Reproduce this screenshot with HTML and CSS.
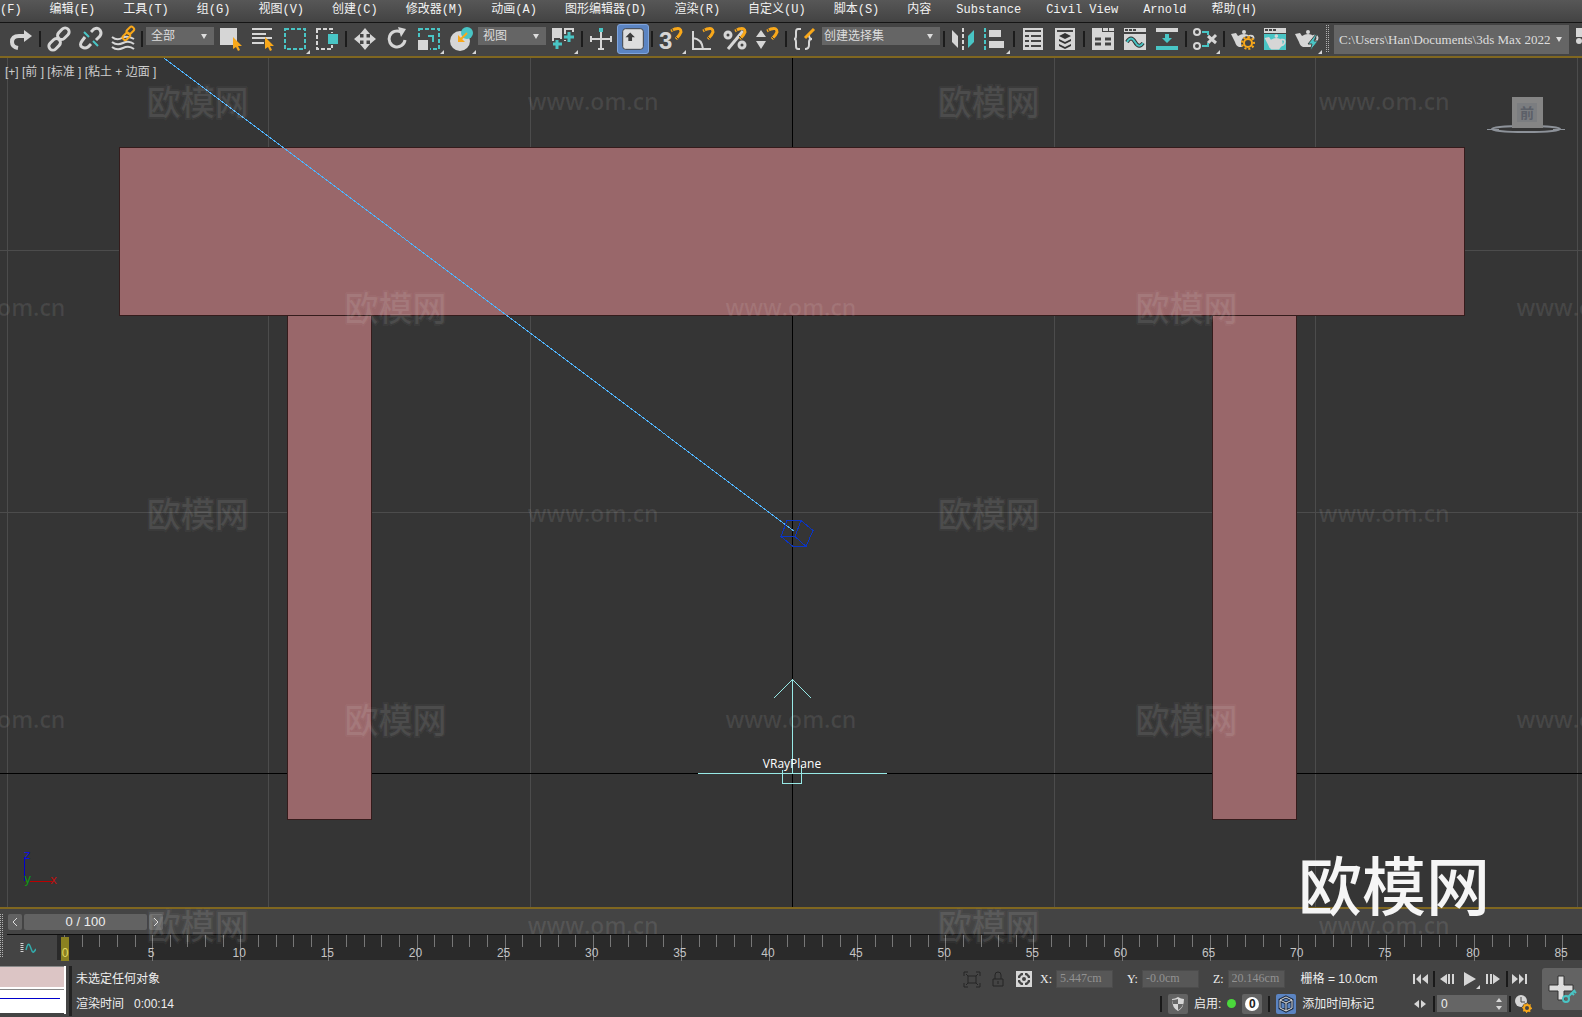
FILE: index.html
```html
<!DOCTYPE html>
<html lang="zh-CN">
	<head>
		<meta charset="utf-8">
		<title>3ds Max 2022</title>
		<link rel="stylesheet" href="styles.css">
	</head>
	<body>
		<svg class="defs" width="0" height="0" aria-hidden="true">
			<defs>
				<path id="flyout" class="lt" d="M27 31h4v-4z"/>
				<g id="magnet"><path class="or w3" d="M16 8l4-2q6-2 6 3-1 3-5 7"/><path stroke="#444" d="M17 6l2 4M20 13l3 3"/></g>
				<g id="teapot">
					<path class="ls" d="M22 13q6-1 4 4-1 2-5 3"/>
					<path class="lt" d="M4 11l5-1 2 3q6-4 12 0 2 4 0 7l-3 4h-8q-3-1-4-5z"/>
					<circle class="lt" cx="17" cy="9" r="2"/>
				</g>
				<g id="gear"><circle cx="21" cy="20" r="4" class="or"/><path class="or" stroke-dasharray="2 2" d="M21 14a6 6 0 1 1 0 12a6 6 0 1 1 0-12z"/></g>
			</defs>
		</svg>

		<nav class="menu">
			<div class="menu-group">
				<a href="#">件(F)</a><a href="#">编辑(E)</a><a href="#">工具(T)</a><a href="#">组(G)</a><a href="#">视图(V)</a><a href="#">创建(C)</a><a href="#">修改器(M)</a><a href="#">动画(A)</a><a href="#">图形编辑器(D)</a><a href="#">渲染(R)</a><a href="#">自定义(U)</a><a href="#">脚本(S)</a><a href="#">内容</a>
			</div>
			<div class="menu-group plugins">
				<a href="#">Substance</a><a href="#">Civil View</a><a href="#">Arnold</a><a href="#">帮助(H)</a>
			</div>
		</nav>

		<div class="toolbar">
			<button class="tool" aria-label="重做"><svg viewBox="0 0 32 32"><path class="ls w4" d="M13 25q-6-1-6-6 0-6 7-6h6"/><path class="lt" d="M19 7l8 6-8 6z"/></svg></button>
			<i class="sep"></i>
			<button class="tool" aria-label="链接"><svg viewBox="0 0 32 32"><g class="ls w3"><rect x="14" y="7" width="13" height="8" rx="4" transform="rotate(-45 20 11)"/><rect x="5" y="17" width="13" height="8" rx="4" transform="rotate(-45 12 21)"/></g></svg></button>
			<button class="tool" aria-label="取消链接"><svg viewBox="0 0 32 32"><g class="ls w3"><path d="M16 9l3-3q4-2 6 1t0 6l-4 4M10 14l-3 4q-3 4 0 6t6 0l3-3"/></g><path class="te" d="M9 9l5 5M18 18l5 5"/></svg></button>
			<button class="tool" aria-label="绑定到空间扭曲"><svg viewBox="0 0 32 32"><path class="ls" d="M5 14q5 4 10 1t12 1M5 19q5 4 11 1t11 1M5 24q5 4 11 1t11 1"/><g class="or"><rect x="19" y="5" width="8" height="5" rx="2" transform="rotate(-45 23 7)"/><rect x="15" y="11" width="8" height="5" rx="2" transform="rotate(-45 19 13)"/></g></svg></button>
			<i class="sep"></i>
			<div class="combo"><select aria-label="选择过滤器"><option>全部</option></select></div>
			<button class="tool" aria-label="选择对象"><svg viewBox="0 0 32 32"><path class="lt" d="M5 5h17v17H5z"/><path class="orf" d="M18 14v12l3-2 2 4 2-1-2-4h4z"/></svg></button>
			<button class="tool" aria-label="按名称选择"><svg viewBox="0 0 32 32"><path class="ls" d="M5 6h20M5 11h14M5 15h20M5 20h12"/><path class="orf" d="M18 14v12l3-2 2 4 2-1-2-4h4z"/></svg></button>
			<button class="tool" aria-label="矩形选择区域"><svg viewBox="0 0 32 32"><path class="te" stroke-dasharray="4 2" d="M6 6h20v20H6z"/><use href="#flyout"/></svg></button>
			<button class="tool" aria-label="窗口/交叉"><svg viewBox="0 0 32 32"><path class="ls" stroke-dasharray="4 2" d="M6 6h15v20H6z"/><path d="M16 10h12v12H16z" fill="#444"/><path class="tef" d="M17 11h10v10H17z"/></svg></button>
			<i class="sep"></i>
			<button class="tool" aria-label="移动"><svg viewBox="0 0 32 32"><path class="ls w3" d="M16 9v14M9 16h14"/><path class="lt" d="M16 5l5 6H11zM16 27l5-6H11zM5 16l6-5v10zM27 16l-6-5v10z"/></svg></button>
			<button class="tool" aria-label="旋转"><svg viewBox="0 0 32 32"><path class="ls w3" d="M20 9a8 8 0 1 0 4 8"/><path class="lt" d="M17 4l8 2-5 8z"/></svg></button>
			<button class="tool" aria-label="缩放"><svg viewBox="0 0 32 32"><path class="te" stroke-dasharray="4 2" d="M6 6h20v20H6z"/><path d="M4 15h13v13H4z" fill="#444"/><path class="lt" d="M5 17h10v10H5z"/><path class="te" d="M15 13h5v6"/><use href="#flyout"/></svg></button>
			<button class="tool" aria-label="放置"><svg viewBox="0 0 32 32"><circle class="lt" cx="15" cy="18" r="10"/><circle class="tef" cx="22" cy="10" r="6"/><path class="or" d="M22 10l-6 6"/><path class="orf" d="M13 19v-7l7 7z"/><use href="#flyout"/></svg></button>
			<div class="combo"><select aria-label="参考坐标系"><option>视图</option></select></div>
			<button class="tool" aria-label="使用轴点中心"><svg viewBox="0 0 32 32"><path class="lt" d="M5 5h10v11H8v8H5zM17 5h10v4h-7v9h-3z"/><path stroke="#444" stroke-width="6" d="M10 15v13M4 21h12M22 7v14M15 14h13"/><path class="te w3" d="M10 17v9M6 21h9M22 9v10M17 14h10"/><use href="#flyout"/></svg></button>
			<i class="sep"></i>
			<button class="tool" aria-label="选择并操纵"><svg viewBox="0 0 32 32"><path class="ls" d="M16 9v18M6 16h20M6 13v6M26 13v6M13 26h6"/><path class="tef" d="M14 5h4v4h-4z"/></svg></button>
			<button class="tool active" aria-label="键盘快捷键覆盖切换"><svg viewBox="0 0 32 32"><rect x="5" y="5" width="22" height="22" rx="3" fill="#ddd" stroke="#3d3d3d"/><path d="M13 9l5 5h-3v4h-4v-4H8z" fill="#3d3d3d"/></svg></button>
			<i class="sep"></i>
			<button class="tool" aria-label="捕捉开关"><svg viewBox="0 0 32 32"><text class="snap" x="4" y="26">3</text><use href="#magnet"/><use href="#flyout"/></svg></button>
			<button class="tool" aria-label="角度捕捉"><svg viewBox="0 0 32 32"><path class="ls" d="M6 8v18h18M6 15q9 1 10 11"/><use href="#magnet"/></svg></button>
			<button class="tool" aria-label="百分比捕捉"><svg viewBox="0 0 32 32"><path class="ls w3" d="M24 8L9 26"/><circle class="ls w3" cx="9" cy="12" r="3"/><circle class="ls w3" cx="23" cy="22" r="3"/><use href="#magnet"/></svg></button>
			<button class="tool" aria-label="微调器捕捉"><svg viewBox="0 0 32 32"><path class="lt" d="M5 14l5-7 5 7zM5 18l5 8 5-8z"/><use href="#magnet"/></svg></button>
			<i class="sep"></i>
			<button class="tool" aria-label="编辑命名选择集"><svg viewBox="0 0 32 32"><path class="ls" d="M12 6H9q-2 0-2 3v4q0 3-2 3 2 0 2 3v4q0 3 2 3h2M16 26q4 0 4-4v-3q0-3 3-3-3 0-3-4"/><path class="or w3" d="M16 15L25 6"/></svg></button>
			<div class="combo wide"><select aria-label="命名选择集"><option>创建选择集</option></select></div>
			<i class="sep"></i>
			<button class="tool" aria-label="镜像"><svg viewBox="0 0 32 32"><path class="lt" d="M5 7l6 6v12l-6-6z"/><path class="ls" stroke-dasharray="4 2" d="M16 5v22"/><path class="tef" d="M27 7l-6 6v12l6-6z"/></svg></button>
			<button class="tool" aria-label="对齐"><svg viewBox="0 0 32 32"><path class="te" stroke-dasharray="4 2" d="M6 5v22"/><path class="lt" d="M10 7h12v7H10zM10 18h15v7H10z"/><use href="#flyout"/></svg></button>
			<i class="sep"></i>
			<button class="tool" aria-label="场景资源管理器"><svg viewBox="0 0 32 32"><path class="lt" d="M6 5h20v22H6z"/><path class="dk" d="M8 8h16M8 13h4M14 13h10M8 18h4M14 18h10M8 23h4M14 23h10"/></svg></button>
			<button class="tool" aria-label="层资源管理器"><svg viewBox="0 0 32 32"><path class="lt" d="M6 5h20v22H6z"/><path class="dk" d="M8 8h16"/><path d="M16 10l6 3-6 3-6-3zM10 16l6 3 6-3v2l-6 3-6-3zM10 21l6 3 6-3v2l-6 3-6-3z" fill="#333"/></svg></button>
			<i class="sep"></i>
			<button class="tool" aria-label="功能区"><svg viewBox="0 0 32 32"><path class="lt" d="M5 5h10v4h12v18H5zM16 5h5v3h-5zM22 5h5v3h-5z"/><path class="dk w3" d="M8 16h6M18 16h6M8 21h6M18 21h6"/></svg></button>
			<button class="tool" aria-label="曲线编辑器"><svg viewBox="0 0 32 32"><path class="lt" d="M5 5h22v22H5z"/><path class="dk" stroke-dasharray="3 1" d="M6 7h12"/><path class="dk" d="M5 10h22"/><path d="M8 19q4-7 8 0t8 1" fill="none" stroke="#333" stroke-width="4"/><path class="te" d="M8 19q4-7 8 0t8 1"/></svg></button>
			<button class="tool" aria-label="动画层"><svg viewBox="0 0 32 32"><path class="lt" d="M5 5h22v4H5z"/><path class="tef" d="M5 23h22v4H5zM14 11h4v4h3l-5 5-5-5h3z"/></svg></button>
			<i class="sep"></i>
			<button class="tool" aria-label="图解视图"><svg viewBox="0 0 32 32"><g class="ls"><circle cx="8" cy="9" r="3"/><circle cx="8" cy="23" r="3"/><path class="w3" d="M19 13l8 7M27 12l-8 8"/></g><path class="te" d="M13 9h6v3M13 23h6v-3"/><use href="#flyout"/></svg></button>
			<i class="sep"></i>
			<button class="tool" aria-label="渲染设置"><svg viewBox="0 0 32 32"><use href="#teapot"/><circle cx="21" cy="20" r="7" fill="#444"/><use href="#gear"/></svg></button>
			<button class="tool" aria-label="渲染帧窗口"><svg viewBox="0 0 32 32"><path class="lt" d="M5 5h22v5H5z"/><path class="dk" stroke-dasharray="3 1" d="M6 7h11"/><path class="tef" d="M5 11h22v16H5z"/><use href="#teapot" transform="translate(2 5) scale(.9)"/></svg></button>
			<button class="tool" aria-label="渲染产品"><svg viewBox="0 0 32 32"><use href="#teapot"/><path d="M25 11l-8 10h4l-2 7 8-10h-4l3-7z" fill="#49c5c5" stroke="#444"/><use href="#flyout"/></svg></button>
			<i class="grip"></i>
			<div class="combo path"><select aria-label="项目文件夹"><option>C:\Users\Han\Documents\3ds Max 2022</option></select></div>
			<button class="tool last" aria-label="警告"><svg viewBox="0 0 32 32"><path class="lt" d="M6 5h6v9H6z"/><circle class="lt" cx="9" cy="18" r="3"/></svg></button>
		</div>

		<main class="viewport">
			<svg class="scene" viewBox="0 58 1582 849" preserveAspectRatio="xMidYMid slice">
				<path class="grid" d="M7.5 58v849M268.5 58v849M530.5 58v849M1054.5 58v849M1315.5 58v849M1577.5 58v849M0 250.5h1582M0 512.5h1582"/>
				<path class="axis" d="M792.5 58v849M0 773.5h1582"/>
				<g class="model">
					<path d="M287.5 315.5h84v504h-84zM1212.5 315.5h84v504h-84z"/>
					<path d="M119.5 147.5h1345v168h-1345z"/>
				</g>
				<path class="target" d="M164 58L794.5 531.5"/>
				<path class="light" d="M787 520.5h14l12 10-7 16h-13l-12-10zM801 520.5l-6 16h-14M795 536.5l11 10"/>
				<path class="plane" d="M698 773.5h189M792.5 680v93M774 698l18.5-18.5 18.5 18.5M782.5 770v13.5h19V766"/>
				<text class="plane-name" x="792" y="768">VRayPlane</text>
				<g class="tripod">
					<path d="M24.5 881v-24" stroke="#00c"/>
					<path d="M30 881.5h22" stroke="#b00"/>
					<text x="24" y="859" fill="#11d">z</text>
					<text x="24" y="883" fill="#191">y</text>
					<text x="50" y="884" fill="#b11">x</text>
				</g>
				<g class="cube">
					<ellipse cx="1526" cy="129" rx="34" ry="3"/>
					<path class="ring" d="M1487 129h12M1553 129h12"/>
					<path class="face" d="M1512 97h31v31h-31z"/>
					<path class="plate" d="M1517 103h20v19h-20z"/>
					<text x="1527" y="118">前</text>
				</g>
			</svg>
			<div class="view-label">[+] [前 ] [标准 ] [粘土 + 边面 ]</div>
			<div class="brand">欧模网</div>
		</main>

		<section class="timeline">
			<i class="grip"></i>
			<div class="track">
				<div class="slider">
					<button aria-label="上一帧"><svg viewBox="0 0 14 16"><path d="M9 4L5 8l4 4"/></svg></button>
					<button class="thumb">0 / 100</button>
					<button aria-label="下一帧"><svg viewBox="0 0 14 16"><path d="M5 4l4 4-4 4"/></svg></button>
				</div>
				<div class="trackbar">
					<button class="curve" aria-label="打开迷你曲线编辑器"><svg viewBox="0 0 16 12"><path class="ls w3" stroke-dasharray="1 1" d="M2 1v10"/><path d="M6 8q2-9 4-4t2 5q1 3 4-2" fill="none" stroke="#3aa" stroke-width="1.5"/></svg></button>
					<div class="ruler" id="ruler"></div>
				</div>
			</div>
		</section>

		<footer class="status">
			<div class="listener">
				<div class="macro"></div>
				<div class="output"></div>
			</div>
			<div class="messages">
				<span>未选定任何对象</span>
				<span>渲染时间 &nbsp; 0:00:14</span>
			</div>
			<div class="info">
				<div class="row">
					<button class="mini dim" aria-label="孤立当前选择"><svg viewBox="0 0 20 20"><path d="M2 7V3h4M14 3h4v4M18 14v4h-4M6 18H2v-4M6 7h8v7H6zM4 5l2 2M16 5l-2 2M4 16l2-2M16 16l-2-2"/></svg></button>
					<button class="mini dim" aria-label="选择锁定"><svg viewBox="0 0 20 20"><path d="M5 10h10v7H5zM7 10V6q0-3 3-3t3 3v4M10 12v3"/></svg></button>
					<button class="mini" aria-label="绝对模式变换输入"><svg viewBox="0 0 20 20"><path class="ls" d="M3 3h14v14H3z"/><circle class="ls" cx="10" cy="10" r="3"/><path class="ls" d="M10 4v3M10 13v3M4 10h3M13 10h3"/><path class="lt" d="M4 4h3L4 7zM16 4v3l-3-3zM4 16v-3l3 3zM16 16h-3l3-3z"/></svg></button>
					<label>X:<input value="5.447cm"></label>
					<label>Y:<input value="-0.0cm"></label>
					<label>Z:<input value="20.146cm"></label>
					<span class="grid-size">栅格 = 10.0cm</span>
				</div>
				<div class="row tags">
					<i class="bar"></i>
					<button class="mini raised" aria-label="安全场景"><svg viewBox="0 0 20 20"><path class="lt" d="M10 3q3 2 6 2 0 9-6 12-6-3-6-12 3 0 6-2z"/><path d="M10 5v5H5l-1-4q3 0 6-1zM10 10h5q-1 4-5 6z" fill="#666"/></svg></button>
					<span>启用:</span>
					<i class="led"></i>
					<button class="mini raised"><span class="zero">0</span></button>
					<i class="bar"></i>
					<button class="mini blue" aria-label="时间标记"><svg viewBox="0 0 20 20"><path d="M10 3l6 3v8l-6 3-6-3V6zM4 6l6 3 6-3M10 9v8" fill="none" stroke="#1e2b40" stroke-width="3"/><path d="M10 3l6 3v8l-6 3-6-3V6zM4 6l6 3 6-3M10 9v8" fill="none" stroke="#ddd"/></svg></button>
					<span>添加时间标记</span>
				</div>
			</div>
			<div class="playback">
				<div class="row">
					<button class="play" aria-label="转至开头"><svg viewBox="0 0 20 20"><path class="lt" d="M3 5h2v10H3zM11 5v10l-5-5zM18 5v10l-6-5z"/></svg></button>
					<i class="bar"></i>
					<button class="play" aria-label="上一帧"><svg viewBox="0 0 20 20"><path class="lt" d="M10 5v10l-7-5zM11 5h2v10h-2zM15 5h2v10h-2z"/></svg></button>
					<button class="play" aria-label="播放"><svg viewBox="0 0 20 20"><path class="lt" d="M4 3l12 7-12 7zM16 20h4v-4z"/></svg></button>
					<button class="play" aria-label="下一帧"><svg viewBox="0 0 20 20"><path class="lt" d="M3 5h2v10H3zM7 5h2v10H7zM10 5v10l7-5z"/></svg></button>
					<i class="bar"></i>
					<button class="play" aria-label="转至结尾"><svg viewBox="0 0 20 20"><path class="lt" d="M2 5v10l6-5zM9 5v10l5-5zM15 5h2v10h-2z"/></svg></button>
				</div>
				<div class="row">
					<button class="play" aria-label="关键点模式"><svg viewBox="0 0 20 20"><path class="lt" d="M9 6v8l-5-4zM11 6v8l5-4z"/></svg></button>
					<i class="bar"></i>
					<div class="frame"><input aria-label="当前帧" value="0"><svg viewBox="0 0 8 16"><path class="lt" d="M1 6l3-4 3 4zM1 10l3 4 3-4z"/></svg></div>
					<i class="bar"></i>
					<button class="play" aria-label="时间配置"><svg viewBox="0 0 20 20"><circle class="lt" cx="8" cy="7" r="6"/><path class="dk thin" d="M8 3v5h4"/><circle cx="14" cy="14" r="5" fill="#444"/><circle class="or" cx="14" cy="14" r="3"/><circle class="or" stroke-dasharray="1 2" cx="14" cy="14" r="4"/></svg></button>
				</div>
			</div>
			<button class="add-key" aria-label="设置关键点"><svg viewBox="0 0 40 42"><path d="M16 8h6v9h9v6h-9v9h-6v-9H7v-6h9z" fill="#ddd" stroke="#333"/><path class="te" d="M26 29l7-7M30 25l2 2M32 23l2 2"/><circle class="te" cx="24" cy="31" r="3"/></svg></button>
		</footer>

		<div class="watermark" id="watermark" aria-hidden="true"></div>

		<script>
			const lastFrame = 85;
			const ruler     = document.getElementById( 'ruler' );
			for( let frame = 0; frame <= lastFrame; frame++ ){
				const tick = document.createElement( 'span' );
				tick.className = frame % 5 ? 'tick' : 'tick major';
				if( frame % 5 == 0 ) tick.innerHTML = '<b>' + frame + '</b>';
				if( frame == 0 ) tick.className += ' current';
				ruler.appendChild( tick );
			}

			const mark      = '<span class="mark">欧模网</span>';
			const site      = '<span class="site">www.om.cn</span>';
			const watermark = document.getElementById( 'watermark' );
			for( let i = 0; i < 5; i++ ){
				const line = document.createElement( 'div' );
				line.className = i % 2 ? 'line shifted' : 'line';
				line.innerHTML = i % 2 ? site + mark + site + mark + site : mark + site + mark + site;
				watermark.appendChild( line );
			}
		</script>
	</body>
</html>
```
FILE: styles.css
```css
*{
	box-sizing: border-box;
}
body{
	position: relative;
	display: flex;
	flex-direction: column;
	height: 100vh;
	margin: 0;
	overflow: hidden;
	background: #444;
	color: #eee;
	font: 12px/16px "Liberation Sans", "Noto Sans CJK SC", sans-serif;
}
button, input, select{
	margin: 0;
	padding: 0;
	border: 0;
	background: none;
	color: inherit;
	font: inherit;
}
svg{
	display: block;
}
.defs{
	position: absolute;
}

/* icon paints */
.lt{ fill: #d6d6d6; }
.ls{ fill: none; stroke: #d6d6d6; stroke-width: 2; }
.te{ fill: none; stroke: #49c5c5; stroke-width: 2; }
.tef{ fill: #49c5c5; }
.or{ fill: none; stroke: #f9a81a; stroke-width: 2; }
.orf{ fill: #f9a81a; }
.dk{ fill: none; stroke: #444; stroke-width: 2; }
.w3{ stroke-width: 3; }
.w4{ stroke-width: 4; }
.thin{ stroke-width: 1; }
.snap{
	fill: #d6d6d6;
	font: bold 24px "Liberation Sans", sans-serif;
}

/* menu */
.menu{
	display: flex;
	flex: none;
	gap: 25px;
	height: 23px;
	border-bottom: 1px solid #151515;
	background: linear-gradient(#575757, #434343);
	font-family: "Liberation Mono", "Noto Sans CJK SC", monospace;
	line-height: 21px;
	white-space: nowrap;
}
.menu-group{
	display: flex;
	gap: 28px;
	margin-left: -12px;
}
.plugins{
	gap: 25px;
	margin-left: 0;
}
.menu a{
	color: #f2f2f2;
	text-decoration: none;
}

/* main toolbar */
.toolbar{
	display: flex;
	flex: none;
	height: 33px;
	padding-left: 5px;
	overflow: hidden;
}
.tool{
	flex: none;
	width: 32px;
	height: 32px;
}
.tool.last{
	margin-right: -20px;
}
.active{
	height: 30px;
	margin: 1px 0;
	border: 1px solid #7fa4dc;
	border-radius: 3px;
	background: #5b84c2;
}
.active svg{
	margin: -1px;
	width: 32px;
	height: 30px;
}
.sep{
	flex: none;
	width: 2px;
	height: 16px;
	margin: 8px 2px;
	background: #1c1c1c;
}
.grip{
	flex: none;
	width: 4px;
	height: 28px;
	margin: 2px 3px;
	background:
		repeating-linear-gradient(transparent 0 1px, #444 1px 2px),
		repeating-linear-gradient(90deg, #b0b0b0 0 1px, #444 1px 2px);
}
.combo{
	position: relative;
	flex: none;
	width: 68px;
	height: 18px;
	margin: 4px 1px;
}
.combo select{
	width: 100%;
	height: 100%;
	padding-left: 5px;
	appearance: none;
	background: #656565;
	color: #ddd;
}
.combo::after{
	content: "";
	position: absolute;
	top: 7px;
	right: 7px;
	border: 3px solid transparent;
	border-top: 5px solid #ddd;
	border-bottom: 0;
	pointer-events: none;
}
.combo.wide{
	width: 118px;
}
.combo.wide select{
	padding-left: 2px;
}
.combo.path{
	flex: 1;
	height: 29px;
	margin-top: 2px;
	font: 13px "Liberation Serif", serif;
}
.combo.path::after{
	top: 12px;
}

/* viewport */
.viewport{
	position: relative;
	flex: 1;
	min-height: 0;
	border: solid #806720;
	border-width: 2px 0;
	background: #353535;
}
.scene{
	width: 100%;
	height: 100%;
}
.scene path{
	fill: none;
	shape-rendering: crispEdges;
}
.grid{ stroke: #4c4c4c; }
.axis{ stroke: #000; }
.scene .model path{
	fill: #99676a;
	stroke: #351c1c;
}
.target{ stroke: #4fb2fa; }
.light{ stroke: #0a35c4; }
.plane{ stroke: #97e9e6; }
.plane-name{
	fill: #fff;
	font: 12px "Open Sans", sans-serif;
	text-anchor: middle;
}
.tripod text{
	font: 12px "DejaVu Sans", sans-serif;
}
.cube ellipse{
	fill: none;
	stroke: #8d9299;
	stroke-width: 2;
}
.ring{ stroke: #8d9299; }
.scene .face{ fill: #858585; }
.scene .plate{ fill: #7b7d80; }
.cube text{
	fill: #5c6068;
	font: bold 14px "Noto Sans CJK SC", sans-serif;
	text-anchor: middle;
}
.view-label{
	position: absolute;
	top: 6px;
	left: 5px;
	color: #ccc;
}
.brand{
	position: absolute;
	right: 92px;
	bottom: -11px;
	z-index: 2;
	color: #f5f5f5;
	font: 500 64px/72px "Noto Sans CJK SC", sans-serif;
}

/* time slider and track bar */
.timeline{
	display: flex;
	flex: none;
	height: 52px;
}
.timeline .grip{
	height: 44px;
	margin: 5px 3px 3px 0;
}
.track{
	flex: 1;
}
.slider{
	display: flex;
	gap: 2px;
	padding: 5px 1px 4px;
}
.slider button{
	width: 14px;
	height: 16px;
	border-radius: 2px;
	background: #626262;
}
.slider .thumb{
	width: 123px;
	font-size: 13px;
}
.slider path{
	fill: none;
	stroke: #ddd;
}
.trackbar{
	display: flex;
	height: 26px;
	border-top: 1px solid #0f0f0f;
}
.curve{
	width: 50px;
	padding-left: 13px;
}
.curve svg{
	width: 16px;
	height: 12px;
}
.ruler{
	display: flex;
	flex: 1;
	padding: 0 2px 0 7px;
	background: #2a2a2a;
}
.tick{
	position: relative;
	flex: 1;
	height: 12px;
	border-left: 1px solid #777;
}
.tick.major{
	height: 26px;
}
.tick b{
	position: absolute;
	bottom: 0;
	left: -13px;
	width: 22px;
	color: #c4c4c4;
	font-weight: normal;
	text-align: center;
}
.tick.current b{
	left: -4px;
	width: 8px;
	height: 24px;
	background: #8b8121;
	color: #e0d860;
	line-height: 32px;
}

/* status bar */
.status{
	display: flex;
	flex: none;
	height: 56px;
	padding-top: 5px;
}
.listener{
	width: 66px;
	height: 48px;
	border-right: 2px solid #fff;
}
.macro, .output{
	height: 23px;
	border-top: 1px solid #888;
	border-bottom: 2px solid #fff;
	background: #dcc5c5;
}
.output{
	height: 24px;
	padding: 8px 4px 0 0;
	background: #fff;
}
.output::before{
	content: "";
	display: block;
	height: 1px;
	background: #00c;
}
.messages{
	display: flex;
	flex: 1;
	flex-direction: column;
	gap: 9px;
	height: 50px;
	margin-left: 3px;
	padding: 5px 0 0 4px;
	border-left: 3px solid #222;
	white-space: nowrap;
}
.row{
	display: flex;
	align-items: center;
	height: 25px;
	white-space: nowrap;
}
.info{
	width: 448px;
}
.info .row{
	gap: 6px;
}
.info label{
	display: flex;
	align-items: center;
	gap: 4px;
	margin-right: 8px;
	font-family: "Liberation Serif", serif;
}
.info input{
	width: 57px;
	height: 18px;
	padding-left: 3px;
	border: 1px solid #4c4c4c;
	background: #575757;
	color: #929292;
}
.grid-size{
	margin-left: 2px;
}
.mini{
	width: 20px;
	height: 20px;
	border-radius: 2px;
}
.dim path{
	fill: none;
	stroke: #252525;
}
.raised{
	background: #636363;
}
.blue{
	background: #5b84c2;
}
.info .tags{
	padding-left: 198px;
}
.bar{
	width: 2px;
	height: 16px;
	background: #1a1a1a;
}
.led{
	width: 9px;
	height: 9px;
	border-radius: 50%;
	background: #4bd83c;
}
.zero{
	display: block;
	width: 14px;
	height: 14px;
	margin: 0 3px;
	border-radius: 50%;
	background: #fff;
	color: #222;
	font-weight: bold;
	line-height: 14px;
}
.playback{
	width: 132px;
}
.playback .row{
	gap: 2px;
}
.play{
	width: 21px;
	height: 20px;
}
.play svg, .mini svg{
	width: 20px;
	height: 20px;
}
.frame{
	display: flex;
	align-items: center;
	width: 70px;
	height: 17px;
	padding: 0 4px;
	background: #656565;
}
.frame input{
	flex: 1;
	min-width: 0;
}
.frame svg{
	width: 8px;
	height: 16px;
}
.add-key{
	width: 40px;
	height: 42px;
	margin: 2px 0 0;
	border-radius: 3px 0 0 3px;
	background: #636363;
}

/* tiled watermark over the whole window */
.watermark{
	position: absolute;
	inset: 0;
	overflow: hidden;
	pointer-events: none;
}
.line{
	display: flex;
	align-items: center;
	height: 206px;
	color: rgba(255, 255, 255, .09);
	text-align: center;
}
.line span{
	flex: none;
	width: 25%;
	padding-bottom: 4px;
}
.shifted{
	margin-left: -12.5%;
	margin-right: -12.5%;
}
.shifted span{
	width: 20%;
}
.mark{
	font: 500 34px/40px "Noto Sans CJK SC", sans-serif;
	-webkit-text-stroke: 3px rgba(255, 255, 255, .05);
}
.site{
	font: 600 23px/30px "Open Sans", sans-serif;
}
```
